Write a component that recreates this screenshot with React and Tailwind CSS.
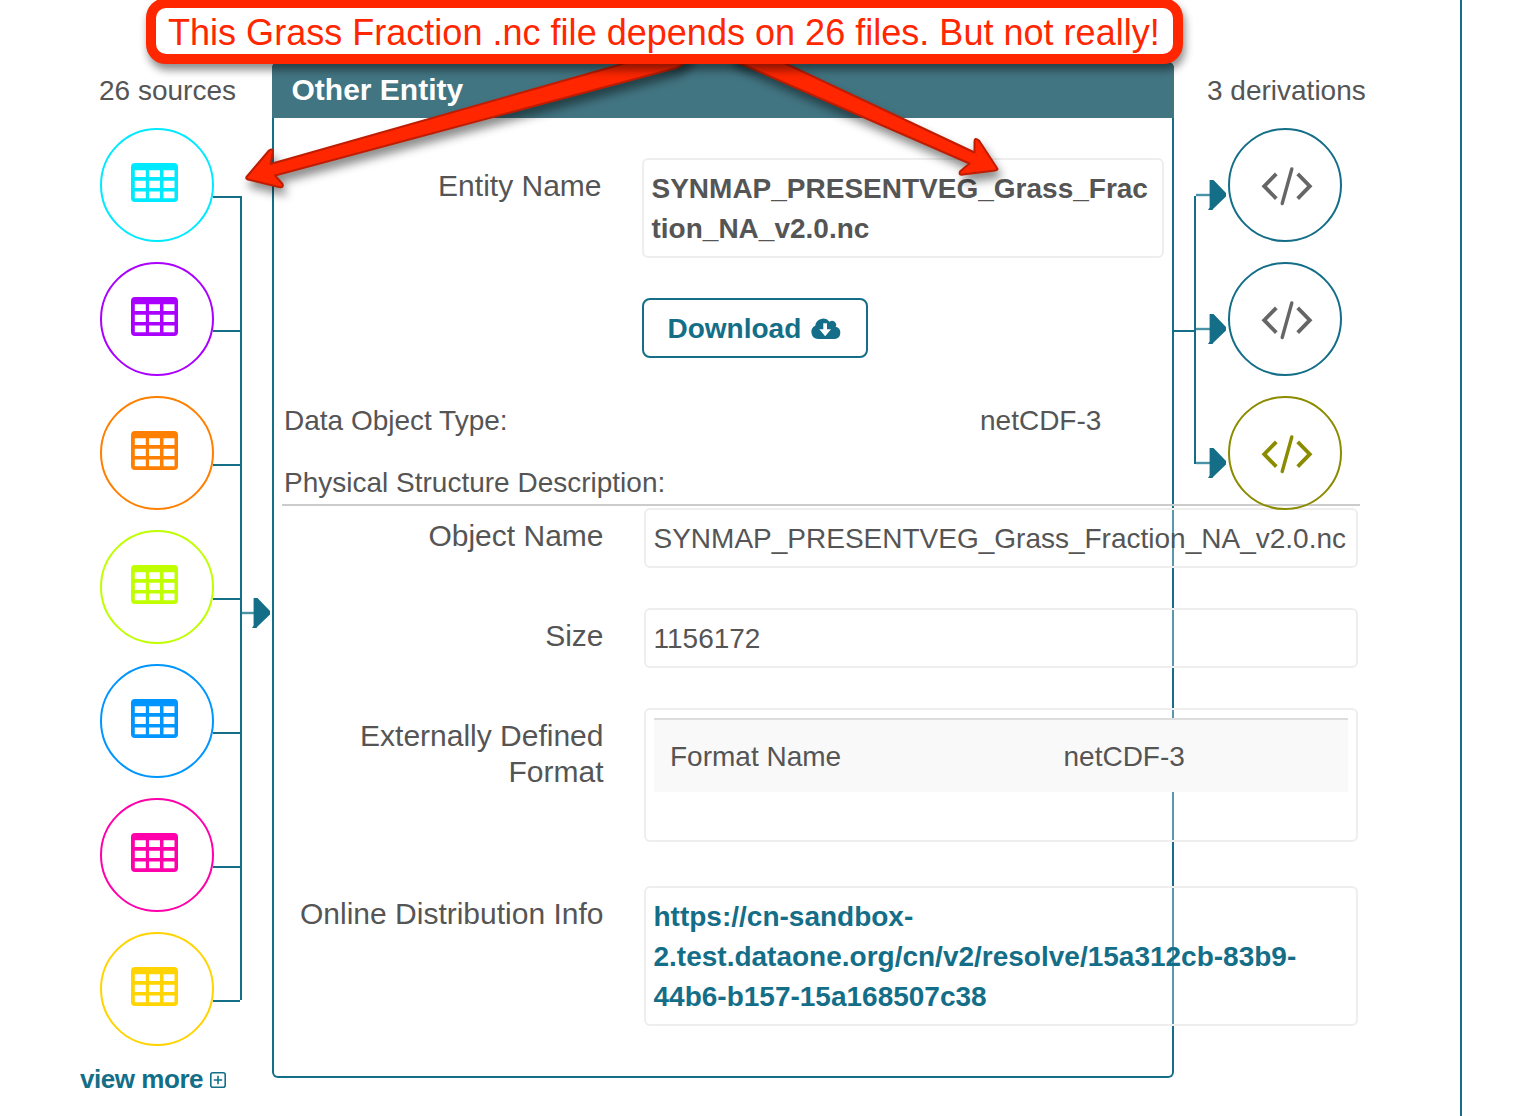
const sourceColors = [
  "text-[#00eaff]",
  "text-[#aa00ff]",
  "text-[#ff7f00]",
  "text-[#bfff00]",
  "text-[#0095ff]",
  "text-[#ff00aa]",
  "text-[#ffd400]",
];

const derivations = [
  { ring: "border-[#146e87]", icon: "text-[#666666]" },
  { ring: "border-[#146e87]", icon: "text-[#666666]" },
  { ring: "border-[#8b8b00]", icon: "text-[#8b8b00]" },
];

function TableIcon() {
  return (
    <svg width="47" height="39" viewBox="0 0 47 39" className="-mt-[5px] -ml-[5px]">
      <path
        fill="currentColor"
        fillRule="evenodd"
        d="M4 0h39a4 4 0 0 1 4 4v31a4 4 0 0 1-4 4H4a4 4 0 0 1-4-4V4a4 4 0 0 1 4-4zM3.8 7.3v6.7h11V7.3zM18 7.3v6.7h11V7.3zM32.5 7.3v6.7h11V7.3zM3.8 17.8v7.2h11v-7.2zM18 17.8v7.2h11v-7.2zM32.5 17.8v7.2h11v-7.2zM3.8 28.4v6.8h11v-6.8zM18 28.4v6.8h11v-6.8zM32.5 28.4v6.8h11v-6.8z"
      />
    </svg>
  );
}

function CodeIcon() {
  return (
    <svg width="54" height="40" viewBox="0 0 54 40" className="mt-[2px] ml-[4px]" fill="none" stroke="currentColor" strokeWidth="3.8">
      <path d="M16.3 7.8 L4.2 20.2 L16.3 32.6" />
      <path d="M37.7 7.8 L49.8 20.2 L37.7 32.6" />
      <path d="M31.8 3 L22.2 37.5" strokeLinecap="round" strokeWidth="3.4" />
    </svg>
  );
}

function ArrowHead() {
  return (
    <svg width="30" height="30" viewBox="0 0 30 30" className="block">
      <path d="M0 15H15" stroke="#4a93a6" strokeWidth="2.4" />
      <path d="M13.600 0H17.500L30 13V16.500L17.500 28.500L16.500 30H12L13.600 27.500z" fill="#146e87" />
    </svg>
  );
}

function CloudDownload() {
  return (
    <svg width="30" height="22" viewBox="0 0 30 22" className="ml-[9.500px] -mt-[1px]">
      <path
        fill="currentColor"
        fillRule="evenodd"
        d="M7 22A7 7 0 0 1 4.200 8.800A8 8 0 0 1 18.500 4.800A4 4 0 0 1 24.600 9.800A6.200 6.200 0 0 1 23.600 22zM12.300 6.300V12.300H8.300L14.200 19.300L20 12.300H16V6.300z"
      />
    </svg>
  );
}

function Field({ label, children, top = "" }) {
  return (
    <div className={"flex items-start " + top}>
      <div className="w-[329.500px] shrink-0 pt-[10px] text-right text-[30px] leading-[36px]">{label}</div>
      <div className="ml-[40.500px] w-[714px] shrink-0 rounded-[6px] border-2 border-[#eeeeee] bg-white/30 pr-2 pl-[7.500px] pt-[9px] pb-[7px] leading-[40px]">
        {children}
      </div>
    </div>
  );
}

function Callout() {
  return (
    <div className="absolute top-0 left-0">
      <svg width="1240" height="220" viewBox="0 0 1240 220" className="block overflow-visible">
        <g
          fill="#ff2600"
          stroke="#bf1c00"
          strokeWidth="2"
          strokeLinejoin="round"
          style={{ filter: "drop-shadow(3px 7px 5px rgba(0,0,0,0.45))" }}
        >
          <path d="M246.500 177L269 150.500Q273 148 273 152L270.500 164L640 59L690 50Q690 62 676 68L275 175.500L282.500 184Q284 188 279 187L248 179.500Q245.500 178.500 246.500 177z" />
          <path d="M997 168L979 140.500Q974.500 137 974.500 141.500L974.500 152.500L780 61L730 50Q730 60 745 65.500L969.500 163.500L960 171.500Q958.500 175.500 963 174.500L995 170.500Q998.500 170 997 168z" />
        </g>
      </svg>
      <div className="absolute -top-[2px] left-[146px] flex h-[66px] w-[1037px] items-center rounded-[20px] border-[10px] border-[#ff2600] bg-white pl-[12px] text-[36px] leading-[44px] whitespace-nowrap text-[#ff2600] shadow-[2px_6px_9px_rgba(0,0,0,0.45)]">
        <span className="pt-[4px] tracking-[0.020px]">This Grass Fraction .nc file depends on 26 files. But not really!</span>
      </div>
    </div>
  );
}

export default function App() {
  return (
    <div className="relative flex h-[1116px] w-[1534px] items-start overflow-hidden bg-white font-['Liberation_Sans',Arial,sans-serif] text-[28px] text-[#555555]">
      <aside className="w-[240px] shrink-0 pt-[71px]">
        <h2 className="pl-[99px] leading-[40px] whitespace-nowrap">26 sources</h2>
        <div className="mt-[17px] flex flex-col gap-5 pl-[100px]">
          {sourceColors.map((c) => (
            <div key={c} className="flex">
              <div className={"flex h-[114px] w-[114px] shrink-0 items-center justify-center rounded-full border-2 border-current " + c}>
                <TableIcon />
              </div>
              <div className="mt-[68px] -ml-px h-[2px] flex-1 bg-[#146e87]" />
            </div>
          ))}
        </div>
        <a className="mt-[13px] flex items-center pl-[80px] text-[26px] leading-[40px] font-bold tracking-[-0.450px] whitespace-nowrap text-[#146e87]">
          view more
          <svg width="16" height="16" viewBox="0 0 16 16" className="mt-[1px] ml-[6.500px] shrink-0" fill="none" stroke="currentColor" strokeWidth="1.600">
            <rect x="0.800" y="0.800" width="14.400" height="14.400" rx="2" />
            <path d="M8 3.800V12.200M3.800 8H12.200" />
          </svg>
        </a>
      </aside>
      <div className="mt-[196px] h-[804px] w-[2px] shrink-0 bg-[#146e87]" />
      <div className="mt-[598px] w-[30px] shrink-0 pr-[2px]">
        <svg width="28" height="30" viewBox="0 0 28 30" className="block">
          <path d="M0 15H13" stroke="#4a93a6" strokeWidth="2.400" />
          <path d="M11.600 0H15.500L28 13V16.500L15.500 28.500L14.500 30H10L11.600 27.500z" fill="#146e87" />
        </svg>
      </div>

      <main className="mt-[62px] h-[1016px] w-[902px] shrink-0 rounded-[6px] border-2 border-t-0 border-[#146e87]">
        <h3 className="-mx-[2px] flex h-[56px] items-center rounded-t-[6px] bg-[#427582] pb-px pl-[19.500px] text-[30px] font-bold text-white">
          Other Entity
        </h3>
        <div className="mt-[40px] flex items-start">
          <div className="w-[327.500px] shrink-0 pt-[10px] text-right text-[30px] leading-[36px]">Entity Name</div>
          <div className="ml-[40.500px] w-[522px] shrink-0 rounded-[6px] border-2 border-[#eeeeee] px-[7.500px] pt-[9px] pb-[7px] leading-[40px] font-bold whitespace-nowrap">
            SYNMAP_PRESENTVEG_Grass_Frac
            <br />
            tion_NA_v2.0.nc
          </div>
        </div>
        <button className="mt-[40px] ml-[368px] flex h-[60px] w-[226px] items-center rounded-[8px] border-2 border-[#146e87] pl-[23.500px] font-bold text-[#146e87]">
          <span className="pt-px">Download</span>
          <CloudDownload />
        </button>
        <div className="mt-[43px] flex pl-[10px] leading-[40px]">
          <div className="w-[696px]">Data Object Type:</div>
          <div>netCDF-3</div>
        </div>
        <div className="mt-[22px] ml-[8px] h-[43px] w-[1078px] border-b-2 border-[#cccccc] pl-[2px] leading-[40px]">
          Physical Structure Description:
        </div>
        <Field label="Object Name" top="mt-[2px]">SYNMAP_PRESENTVEG_Grass_Fraction_NA_v2.0.nc</Field>
        <Field label="Size" top="mt-[40px]">1156172</Field>
        <Field label={<>Externally Defined<br />Format</>} top="mt-[40px]">
          <div className="-mt-px mb-[41px] ml-[0.500px] flex h-[74px] w-[694px] items-center border-t-2 border-[#dddddd] bg-[#f9f9f9] pt-[2px] pl-4">
            <span className="w-[393.500px]">Format Name</span>
            <span>netCDF-3</span>
          </div>
        </Field>
        <Field label="Online Distribution Info" top="mt-[44px]">
          <a className="block font-bold whitespace-nowrap text-[#146e87]">
            https://cn-sandbox-
            <br />
            2.test.dataone.org/cn/v2/resolve/15a312cb-83b9-
            <br />
            44b6-b157-15a168507c38
          </a>
        </Field>
      </main>

      <div className="mt-[330px] h-[2px] w-[20px] shrink-0 bg-[#146e87]" />
      <div className="mt-[196px] h-[268px] w-[2px] shrink-0 bg-[#146e87]" />
      <section className="w-[264px] shrink-0 pt-[71px]">
        <h2 className="pl-[11px] leading-[40px] whitespace-nowrap">3 derivations</h2>
        <div className="mt-[17px] flex flex-col gap-5">
          {derivations.map((d, i) => (
            <div key={i} className="flex items-start">
              <div className="mt-[52px] mr-[2px]">
                <ArrowHead />
              </div>
              <div className={"flex h-[114px] w-[114px] items-center justify-center rounded-full border-2 " + d.ring + " " + d.icon}>
                <CodeIcon />
              </div>
            </div>
          ))}
        </div>
      </section>
      <div className="h-full w-[2px] shrink-0 bg-[#146e87]" />
      <Callout />
    </div>
  );
}
